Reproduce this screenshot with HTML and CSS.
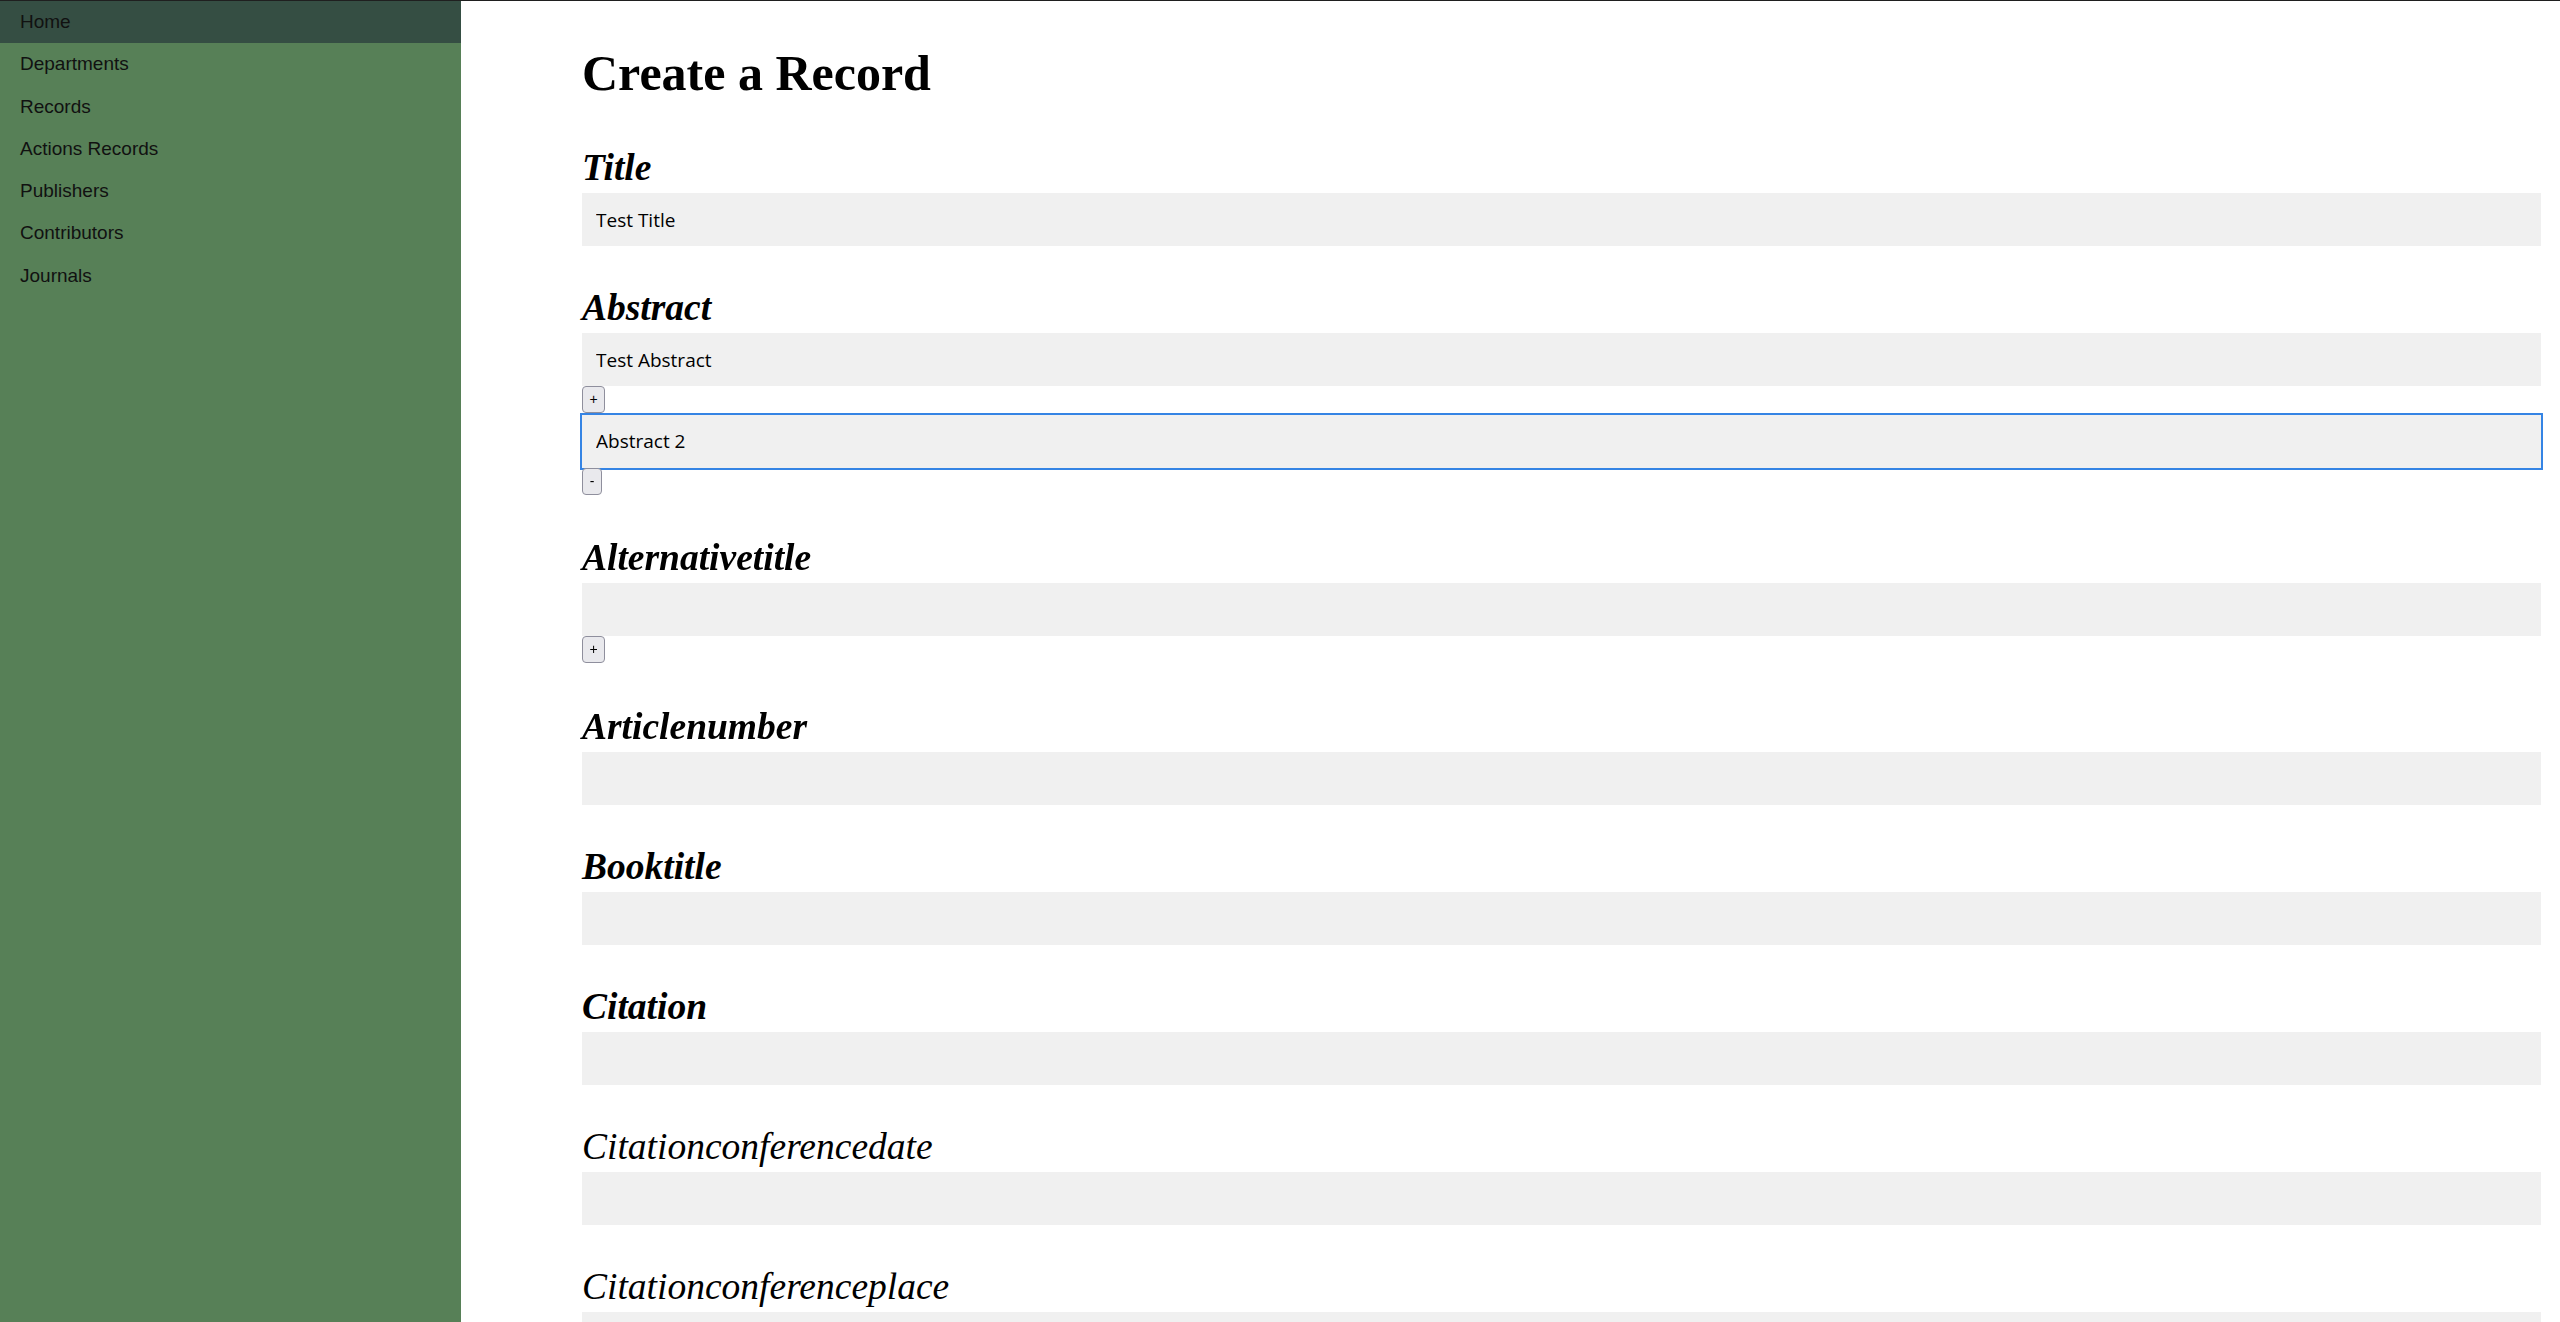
FILE: index.html
```html
<!DOCTYPE html>
<html lang="en">
<head>
<meta charset="utf-8">
<title>Create a Record</title>
<link rel="stylesheet" href="styles.css">
</head>
<body>
<div class="app">
  <nav class="sidebar">
    <a class="nav-item active" href="#">Home</a>
    <a class="nav-item" href="#">Departments</a>
    <a class="nav-item" href="#">Records</a>
    <a class="nav-item" href="#">Actions Records</a>
    <a class="nav-item" href="#">Publishers</a>
    <a class="nav-item" href="#">Contributors</a>
    <a class="nav-item" href="#">Journals</a>
  </nav>
  <main class="main">
    <h1 class="page-title">Create a Record</h1>
    <form class="record-form">
      <div class="field">
        <h2 class="field-label">Title</h2>
        <input class="text-input" type="text" value="Test Title">
      </div>
      <div class="field">
        <h2 class="field-label">Abstract</h2>
        <input class="text-input" type="text" value="Test Abstract">
        <button class="row-btn add-btn" type="button">+</button>
        <input class="text-input is-focused" type="text" value="Abstract 2" autofocus>
        <button class="row-btn remove-btn" type="button">-</button>
      </div>
      <div class="field">
        <h2 class="field-label">Alternativetitle</h2>
        <input class="text-input" type="text">
        <button class="row-btn add-btn" type="button">+</button>
      </div>
      <div class="field">
        <h2 class="field-label">Articlenumber</h2>
        <input class="text-input" type="text">
      </div>
      <div class="field">
        <h2 class="field-label">Booktitle</h2>
        <input class="text-input" type="text">
      </div>
      <div class="field">
        <h2 class="field-label">Citation</h2>
        <input class="text-input" type="text">
      </div>
      <div class="field">
        <h2 class="field-label light">Citationconferencedate</h2>
        <input class="text-input" type="text">
      </div>
      <div class="field">
        <h2 class="field-label light">Citationconferenceplace</h2>
        <input class="text-input" type="text">
      </div>
    </form>
  </main>
</div>
</body>
</html>
```

FILE: styles.css
```css
* {
  box-sizing: border-box;
}

html, body {
  margin: 0;
  padding: 0;
  background: #ffffff;
}

.app {
  display: flex;
  height: 100vh;
  overflow: hidden;
  border-top: 1px solid #1f1f1f;
}

.sidebar {
  width: 461px;
  flex: 0 0 461px;
  background: #578057;
  display: flex;
  flex-direction: column;
}

.nav-item {
  display: block;
  height: 42.25px;
  line-height: 42.25px;
  padding-left: 20px;
  font-family: "Liberation Sans", Arial, sans-serif;
  font-size: 19px;
  color: #111;
  text-decoration: none;
}

.nav-item.active {
  background: #354e43;
}

.main {
  flex: 1;
  padding: 42px 19px 0 121px;
  overflow: hidden;
}

.page-title {
  margin: 0 0 42px;
  font-family: "Liberation Serif", "Times New Roman", serif;
  font-weight: bold;
  font-size: 50px;
  line-height: 60px;
  color: #000;
}

.record-form {
  display: flex;
  flex-direction: column;
}

.field {
  display: flex;
  flex-direction: column;
  align-items: flex-start;
  margin-bottom: 39px;
}

.field-label {
  margin: 0 0 3px;
  font-family: "Liberation Serif", "Times New Roman", serif;
  font-style: italic;
  font-weight: bold;
  font-size: 37.5px;
  line-height: 45px;
  color: #000;
}

.field-label.light {
  font-weight: normal;
}

.text-input {
  display: block;
  width: 100%;
  height: 53px;
  border: none;
  background: #f0f0f0;
  padding: 0 14px;
  font-family: "Open Sans", "Noto Sans", sans-serif;
  font-size: 19px;
  color: #000;
  caret-color: #000;
  outline: none;
}

.text-input.is-focused,
.text-input:focus {
  outline: 2px solid #3584e4;
  outline-offset: 0;
}

.row-btn {
  display: block;
  height: 27px;
  margin: 0 0 1.5px;
  padding: 0;
  border: 1px solid #8f8f9d;
  border-radius: 4px;
  background: #e9e9ed;
  font-family: "Liberation Sans", Arial, sans-serif;
  font-size: 14px;
  line-height: 25px;
  color: #000;
  text-align: center;
}

.add-btn {
  width: 23px;
}

.remove-btn {
  width: 20px;
}
```
